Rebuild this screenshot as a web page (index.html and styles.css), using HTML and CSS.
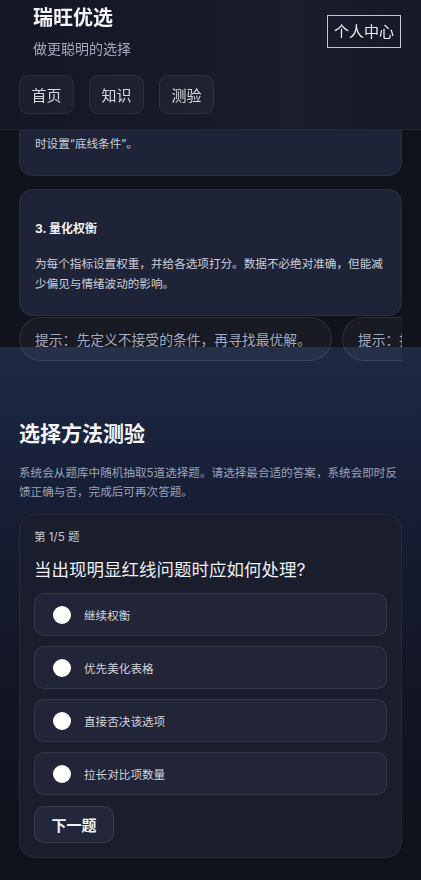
FILE: index.html
```html
<!DOCTYPE html>
<html lang="zh-CN">
<head>
    <meta charset="UTF-8">
    <meta name="viewport" content="width=device-width, initial-scale=1.0">
    <title>瑞旺优选</title>
    <link rel="stylesheet" href="styles.css">
</head>
<body>
    <header class="site-header">
        <div class="header-top">
            <div class="brand">
                <h1>瑞旺优选</h1>
                <p>做更聪明的选择</p>
            </div>
            <button class="user-btn">个人中心</button>
        </div>
        <nav class="nav">
            <a href="#">首页</a>
            <a href="#">知识</a>
            <a href="#">测验</a>
        </nav>
    </header>

    <main class="knowledge">
        <div class="card">
            <h3>2. 设定底线</h3>
            <p>列出不能接受的情况，如超出预算或违背原则，并在比较选项之前及时设置“底线条件”。</p>
        </div>
        <div class="card">
            <h3>3. 量化权衡</h3>
            <p>为每个指标设置权重，并给各选项打分。数据不必绝对准确，但能减少偏见与情绪波动的影响。</p>
        </div>
        <div class="tips">
            <span class="tip">提示：先定义不接受的条件，再寻找最优解。</span>
            <span class="tip">提示：把情绪与事实分开记录。</span>
        </div>
    </main>

    <section class="quiz-section">
        <h2>选择方法测验</h2>
        <p class="quiz-desc">系统会从题库中随机抽取5道选择题。请选择最合适的答案，系统会即时反馈正确与否，完成后可再次答题。</p>
        <div class="quiz-card">
            <div class="quiz-count">第 1/5 题</div>
            <div class="quiz-question">当出现明显红线问题时应如何处理?</div>
            <div class="options">
                <label class="option"><span class="dot"></span>继续权衡</label>
                <label class="option"><span class="dot"></span>优先美化表格</label>
                <label class="option"><span class="dot"></span>直接否决该选项</label>
                <label class="option"><span class="dot"></span>拉长对比项数量</label>
            </div>
            <button class="next-btn">下一题</button>
        </div>
    </section>
</body>
</html>
```

FILE: styles.css
```css
* {
    box-sizing: border-box;
}
body {
    margin: 0;
    background: #10121c;
    color: #e6e8ee;
    font-family: Inter, "Noto Sans CJK SC", sans-serif;
}
.site-header {
    position: fixed;
    top: 0;
    left: 0;
    right: 0;
    z-index: 10;
    padding: 5px 20px 15px 19px;
    background: linear-gradient(90deg, #131624, #191d2c 70%, #161927);
    border-bottom: 1px solid rgba(255, 255, 255, 0.06);
}
.header-top {
    display: flex;
    justify-content: space-between;
    align-items: flex-start;
}
.brand {
    padding-left: 14px;
}
.brand h1 {
    margin: 0;
    font-size: 20px;
    line-height: 26px;
    font-weight: 700;
    color: #f2f3f6;
}
.brand p {
    margin: 8px 0 0;
    font-size: 14px;
    line-height: 20px;
    color: #a3a8bc;
}
.user-btn {
    margin-top: 10px;
    padding: 5px 6px;
    font-family: inherit;
    font-size: 15px;
    line-height: 21px;
    color: #eceef2;
    background: transparent;
    border: 1.5px solid #c4c7d0;
    border-radius: 0;
}
.nav {
    display: flex;
    gap: 15px;
    margin-top: 16px;
}
.nav a {
    width: 55px;
    height: 39px;
    display: flex;
    align-items: center;
    justify-content: center;
    font-size: 15px;
    color: #d6d9e1;
    text-decoration: none;
    background: rgba(255, 255, 255, 0.035);
    border: 1px solid rgba(255, 255, 255, 0.07);
    border-radius: 9px;
}
.knowledge {
    padding: 49px 19px 0;
    position: relative;
    z-index: 1;
}
.card {
    background: #1f2337;
    border: 1px solid rgba(255, 255, 255, 0.06);
    border-radius: 14px;
    padding: 16px 15px 8px;
    margin-bottom: 13px;
}
.card h3 {
    margin: 14px 0 16px;
    font-size: 12px;
    line-height: 18px;
    font-weight: 700;
    color: #f0f1f5;
}
.card p {
    margin: 0 0 13px;
    font-size: 11.6px;
    line-height: 20px;
    color: #cdd0d9;
}
.card:nth-of-type(2) {
    margin-bottom: 1px;
}
.tips {
    display: flex;
    gap: 10px;
    overflow: hidden;
    white-space: nowrap;
    margin-bottom: -14px;
}
.tip {
    flex: none;
    height: 44px;
    display: flex;
    align-items: center;
    padding: 0 20px 0 15px;
    font-size: 13.8px;
    color: #a3a9be;
    background: rgba(255, 255, 255, 0.035);
    border: 1px solid rgba(255, 255, 255, 0.1);
    border-radius: 22px;
}
.quiz-section {
    padding: 56px 19px 20px;
    background: linear-gradient(180deg, #1e2944 0%, #182038 25%, #131727 55%, #0f111b 100%);
}
.quiz-section h2 {
    margin: 17px 0 17px;
    font-size: 21px;
    line-height: 27px;
    font-weight: 700;
    color: #f4f5f8;
}
.quiz-desc {
    margin: 0 0 12px;
    font-size: 11.6px;
    line-height: 19px;
    color: #9aa2b8;
}
.quiz-card {
    background: #1a1d2c;
    border: 1px solid rgba(255, 255, 255, 0.06);
    border-radius: 16px;
    padding: 14px 14px 14px;
}
.quiz-count {
    font-size: 11.6px;
    line-height: 16px;
    color: #c3c6d1;
}
.quiz-question {
    margin-top: 13px;
    font-size: 17.5px;
    line-height: 24px;
    color: #eceef2;
}
.options {
    display: flex;
    flex-direction: column;
    gap: 10px;
    margin-top: 11px;
}
.option {
    height: 43px;
    display: flex;
    align-items: center;
    gap: 13px;
    padding-left: 18px;
    font-size: 11.6px;
    color: #d0d3dd;
    background: #212537;
    border: 1px solid rgba(255, 255, 255, 0.09);
    border-radius: 10px;
}
.dot {
    width: 18px;
    height: 18px;
    border-radius: 50%;
    background: #fff;
}
.next-btn {
    margin-top: 11px;
    width: 80px;
    height: 37px;
    font-family: inherit;
    font-size: 15px;
    font-weight: 700;
    color: #f2f3f6;
    background: #24273a;
    border: 1px solid rgba(255, 255, 255, 0.1);
    border-radius: 10px;
}
```
